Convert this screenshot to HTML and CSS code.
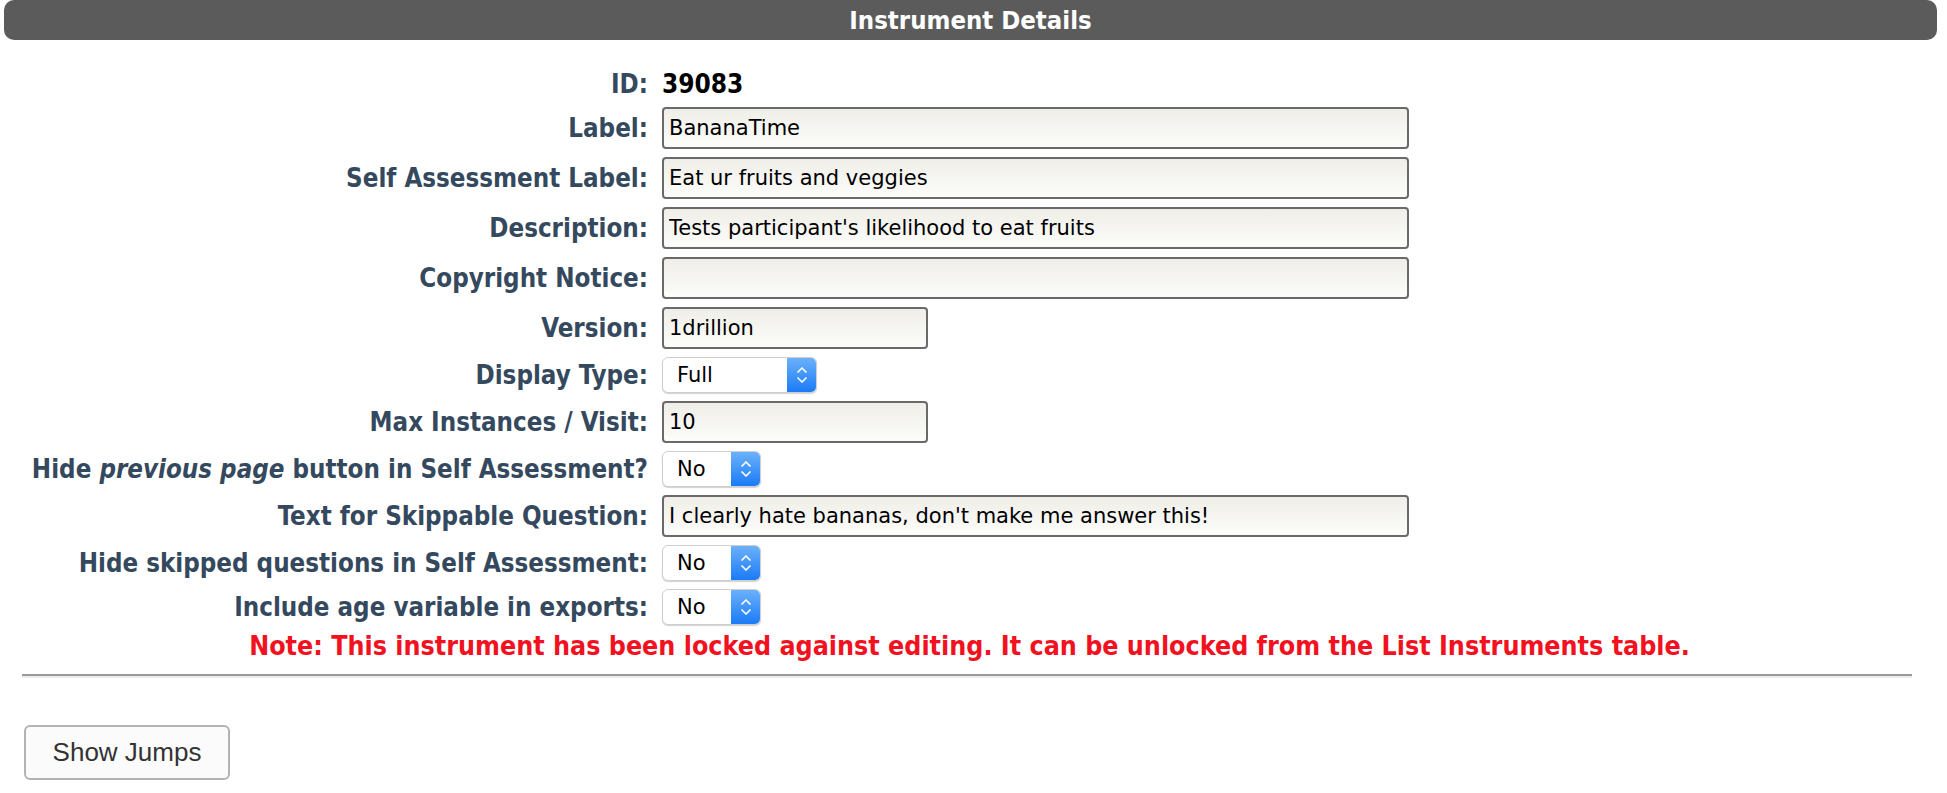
FILE: index.html
```html
<!DOCTYPE html>
<html lang="en">
<head>
<meta charset="utf-8">
<title>Instrument Details</title>
<link rel="stylesheet" href="styles.css">
</head>
<body>
<div class="header">Instrument Details</div>
<div class="form">
  <div class="lbl">ID:</div>
  <div class="val"><span class="id">39083</span></div>

  <div class="lbl">Label:</div>
  <div class="val"><input class="text wide" type="text" value="BananaTime"></div>

  <div class="lbl">Self Assessment Label:</div>
  <div class="val"><input class="text wide" type="text" value="Eat ur fruits and veggies"></div>

  <div class="lbl">Description:</div>
  <div class="val"><input class="text wide" type="text" value="Tests participant's likelihood to eat fruits"></div>

  <div class="lbl">Copyright Notice:</div>
  <div class="val"><input class="text wide" type="text" value=""></div>

  <div class="lbl">Version:</div>
  <div class="val"><input class="text short" type="text" value="1drillion"></div>

  <div class="lbl">Display Type:</div>
  <div class="val">
    <span class="sel sel-wide"><select><option>Full</option></select><span class="arrow"><svg viewBox="0 0 12 22" width="12" height="22"><path d="M2 8 L6 4 L10 8 M2 14 L6 18 L10 14" fill="none" stroke="#fff" stroke-width="1.7" stroke-linecap="round" stroke-linejoin="round"/></svg></span></span>
  </div>

  <div class="lbl">Max Instances / Visit:</div>
  <div class="val"><input class="text short" type="text" value="10"></div>

  <div class="lbl">Hide <em>previous page</em> button in Self Assessment?</div>
  <div class="val">
    <span class="sel"><select><option>No</option></select><span class="arrow"><svg viewBox="0 0 12 22" width="12" height="22"><path d="M2 8 L6 4 L10 8 M2 14 L6 18 L10 14" fill="none" stroke="#fff" stroke-width="1.7" stroke-linecap="round" stroke-linejoin="round"/></svg></span></span>
  </div>

  <div class="lbl">Text for Skippable Question:</div>
  <div class="val"><input class="text wide" type="text" value="I clearly hate bananas, don't make me answer this!"></div>

  <div class="lbl">Hide skipped questions in Self Assessment:</div>
  <div class="val">
    <span class="sel"><select><option>No</option></select><span class="arrow"><svg viewBox="0 0 12 22" width="12" height="22"><path d="M2 8 L6 4 L10 8 M2 14 L6 18 L10 14" fill="none" stroke="#fff" stroke-width="1.7" stroke-linecap="round" stroke-linejoin="round"/></svg></span></span>
  </div>

  <div class="lbl">Include age variable in exports:</div>
  <div class="val">
    <span class="sel"><select><option>No</option></select><span class="arrow"><svg viewBox="0 0 12 22" width="12" height="22"><path d="M2 8 L6 4 L10 8 M2 14 L6 18 L10 14" fill="none" stroke="#fff" stroke-width="1.7" stroke-linecap="round" stroke-linejoin="round"/></svg></span></span>
  </div>

  <div class="note">Note: This instrument has been locked against editing. It can be unlocked from the List Instruments table.</div>
</div>
<hr class="rule">
<button class="btn" type="button">Show Jumps</button>
</body>
</html>
```

FILE: styles.css
```css
html, body {
  margin: 0;
  padding: 0;
  background: #ffffff;
}

body {
  font-family: "DejaVu Sans", sans-serif;
}

.header {
  margin: 0 10px 0 4px;
  height: 40px;
  line-height: 40px;
  background: #5b5b5b;
  border-radius: 10px;
  color: #ffffff;
  text-align: center;
  font-family: "DejaVu Sans Condensed", "DejaVu Sans", sans-serif;
  font-weight: bold;
  font-size: 25.5px;
}

.form {
  display: grid;
  grid-template-columns: 626px 1fr;
  column-gap: 14px;
  row-gap: 8px;
  align-items: center;
  margin: 29px 30px 0 22px;
}

.lbl {
  text-align: right;
  font-family: "DejaVu Sans Condensed", "DejaVu Sans", sans-serif;
  font-weight: bold;
  font-size: 25.7px;
  line-height: 30px;
  color: #35495e;
  white-space: nowrap;
}

.val {
  display: flex;
  align-items: center;
  min-height: 30px;
}

.id {
  font-family: "DejaVu Sans Condensed", "DejaVu Sans", sans-serif;
  font-weight: bold;
  font-size: 26px;
  line-height: 30px;
  color: #000000;
}

.text {
  box-sizing: border-box;
  height: 42px;
  margin: 0;
  padding: 0 5px;
  border: 2px solid #6a6a6a;
  border-radius: 4px;
  background: linear-gradient(#efeee8, #fcfcfa);
  font-family: "DejaVu Sans", sans-serif;
  font-size: 21px;
  color: #000000;
  outline: none;
}

.wide {
  width: 747px;
}

.short {
  width: 266px;
}

.sel {
  box-sizing: border-box;
  display: inline-flex;
  align-items: stretch;
  width: 99px;
  height: 36px;
  border: 1px solid #cfcfcf;
  border-radius: 6px;
  background: #ffffff;
  box-shadow: 0 1px 1px rgba(0, 0, 0, 0.18);
  overflow: hidden;
}

.sel-wide {
  width: 155px;
}

.sel select {
  flex: 1;
  min-width: 0;
  -webkit-appearance: none;
  appearance: none;
  border: 0;
  margin: 0;
  padding: 0 0 0 14px;
  background: transparent;
  font-family: "DejaVu Sans", sans-serif;
  font-size: 21px;
  color: #000000;
  outline: none;
}

.arrow {
  width: 29px;
  display: flex;
  align-items: center;
  justify-content: center;
  background: linear-gradient(#6bb1fb, #1a7bf6);
}

.note {
  grid-column: 1 / -1;
  margin-top: -2px;
  text-align: center;
  font-family: "DejaVu Sans Condensed", "DejaVu Sans", sans-serif;
  font-weight: bold;
  font-size: 26.6px;
  line-height: 30px;
  color: #f2121f;
}

.rule {
  margin: 13px 35px 0 22px;
  height: 0;
  border: 0;
  border-top: 2px solid #9a9a9a;
  border-bottom: 2px solid #ededed;
}

.btn {
  display: block;
  margin: 47px 0 0 24px;
  width: 206px;
  height: 55px;
  border: 2px solid #b3b3b3;
  border-radius: 6px;
  background: #fbfbfb;
  font-family: "Liberation Sans", Arial, sans-serif;
  font-size: 26px;
  color: #333333;
}
```
